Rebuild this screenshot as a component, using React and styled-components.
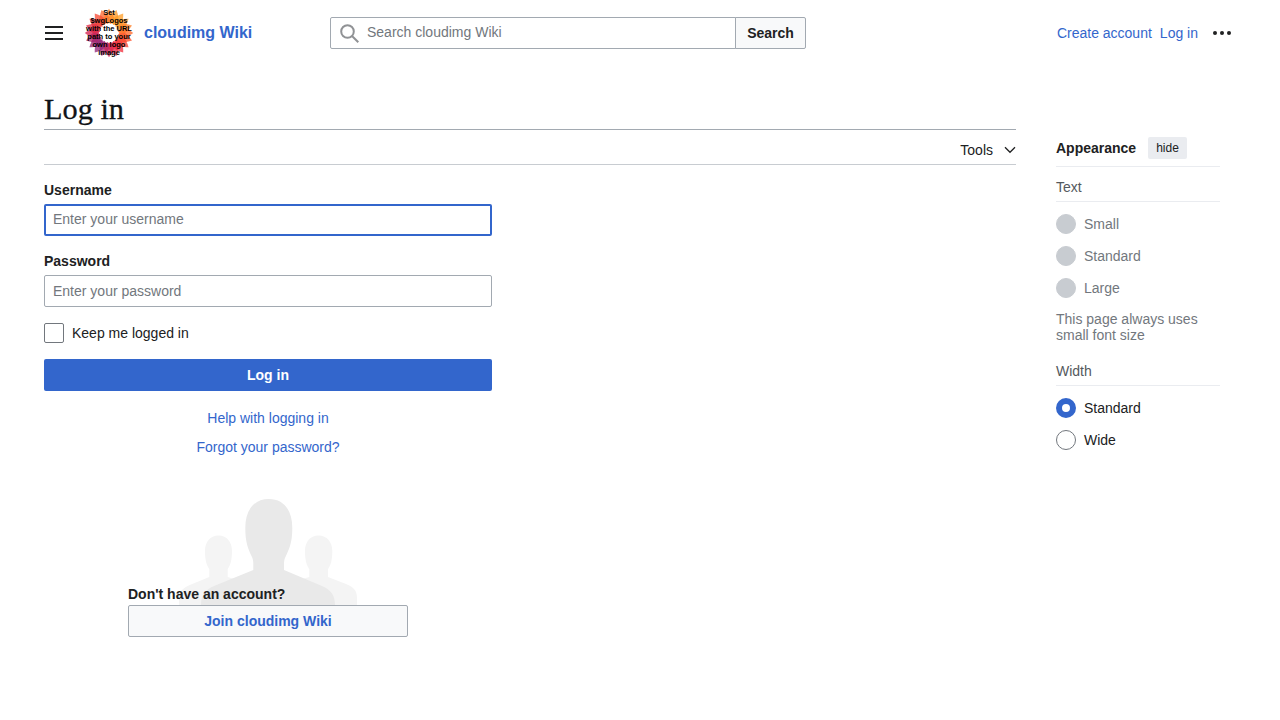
import React from 'react';
import styled, { createGlobalStyle, css } from 'styled-components';

const GlobalStyle = createGlobalStyle`
  *, *::before, *::after { box-sizing: border-box; }
  html, body { margin: 0; background: #fff; }
  body {
    font: 14px/22px "Liberation Sans", Helvetica, Arial, sans-serif;
    color: #202122;
  }
  a { color: #36c; text-decoration: none; }
  input, button { font: inherit; margin: 0; }
`;

const Page = styled.div`
  height: 720px;
  padding: 0 44px;
  overflow: hidden;
`;

const Header = styled.header`
  display: flex;
  align-items: center;
  height: 66px;
`;

const MenuButton = styled.button`
  display: flex;
  width: 20px;
  height: 20px;
  padding: 0;
  border: 0;
  background: none;
  color: #202122;
`;

const SiteLink = styled.a`
  display: flex;
  align-items: center;
  width: 246px;
  margin-left: 20px;
  font-size: 16px;
  font-weight: 700;
`;

const LogoImage = styled.svg`
  display: block;
  width: 50px;
  height: 50px;
  margin-right: 10px;
  overflow: visible;
`;

const LogoText = styled.text`
  font: 700 7.5px "Liberation Sans", Helvetica, sans-serif;
  fill: #000;
  text-anchor: middle;
`;

const SearchForm = styled.form`
  display: flex;
  width: 476px;
  height: 32px;
`;

const SearchField = styled.label`
  display: flex;
  align-items: center;
  gap: 7px;
  width: 406px;
  padding-left: 9px;
  border: 1px solid #a2a9b1;
  border-radius: 2px 0 0 2px;
  color: #909295;
  svg { margin-top: 2px; }
`;

const SearchInput = styled.input`
  flex: 1;
  min-width: 0;
  height: 30px;
  padding: 0 0 2px;
  border: 0;
  outline: 0;
  background: transparent;
  &::placeholder { color: #72777d; opacity: 1; }
`;

const SearchButton = styled.button`
  width: 71px;
  margin-left: -1px;
  padding: 0;
  border: 1px solid #a2a9b1;
  border-radius: 0 2px 2px 0;
  background: #f8f9fa;
  color: #202122;
  font-weight: 700;
`;

const UserLinks = styled.nav`
  display: flex;
  align-items: center;
  gap: 8px;
  margin-left: auto;
  margin-right: 4px;
  svg { margin-left: 6px; }
`;

const Columns = styled.div`
  display: flex;
  gap: 40px;
`;

const Content = styled.main`
  width: 972px;
  padding-top: 22px;
`;

const Title = styled.h1`
  height: 42px;
  margin: 0;
  border-bottom: 1px solid #a2a9b1;
  color: #101418;
  font: 400 30.3px/42px "Liberation Serif", Georgia, serif;
  -webkit-text-stroke: 0.3px #101418;
`;

const PageTools = styled.div`
  display: flex;
  justify-content: flex-end;
  align-items: center;
  gap: 11px;
  height: 35px;
  padding-top: 6px;
  border-bottom: 1px solid #c8ccd1;
`;

const LoginForm = styled.form`
  width: 448px;
  padding-top: 14px;
`;

const Field = styled.div`
  height: 71px;
`;

const FieldLabel = styled.label`
  display: block;
  height: 25px;
  font-weight: 700;
`;

const TextInput = styled.input`
  display: block;
  width: 100%;
  height: 32px;
  padding: 0 8px;
  border: 1px solid #a2a9b1;
  border-radius: 2px;
  outline: 0;
  background: #fff;
  &::placeholder { color: #72777d; opacity: 1; }
  ${(p) => p.$active && css`
    padding: 0 7px 2px;
    border: 2px solid #36c;
  `}
`;

const RememberRow = styled.label`
  display: flex;
  align-items: center;
  gap: 8px;
  height: 20px;
  margin: 2px 0 16px;
`;

const CheckBox = styled.input`
  appearance: none;
  width: 20px;
  height: 20px;
  border: 1px solid #72777d;
  border-radius: 2px;
  background: #fff;
`;

const SubmitButton = styled.button`
  display: block;
  width: 100%;
  height: 32px;
  border: 0;
  border-radius: 2px;
  background: #36c;
  color: #fff;
  font-weight: 700;
`;

const HelpLinks = styled.div`
  display: flex;
  flex-direction: column;
  align-items: center;
  gap: 7px;
  padding-top: 16px;
`;

const JoinSection = styled.section`
  display: grid;
  width: 280px;
  margin: 40px auto 0;
`;

const Crowd = styled.svg`
  grid-area: 1 / 1;
  justify-self: center;
  display: block;
`;

const JoinPrompt = styled.div`
  grid-area: 1 / 1;
  align-self: end;
  font-weight: 700;
`;

const JoinButton = styled.a`
  height: 32px;
  border: 1px solid #a2a9b1;
  border-radius: 2px;
  background: #f8f9fa;
  line-height: 30px;
  font-weight: 700;
  text-align: center;
`;

const Sidebar = styled.aside`
  width: 164px;
  padding-top: 71px;
`;

const SidebarHeading = styled.div`
  display: flex;
  align-items: flex-start;
  gap: 12px;
  height: 30px;
  border-bottom: 1px solid #eaecf0;
  font-weight: 700;
`;

const HideButton = styled.button`
  height: 22px;
  padding: 0 8px;
  border: 0;
  border-radius: 2px;
  background: #eaecf0;
  color: #202122;
  font-size: 12px;
  font-weight: 400;
`;

const GroupTitle = styled.div`
  height: 35px;
  padding-top: 9px;
  border-bottom: 1px solid #eaecf0;
  color: #54595d;
`;

const Options = styled.div`
  display: flex;
  flex-direction: column;
  gap: 12px;
  padding-top: 12px;
`;

const Option = styled.label`
  display: flex;
  align-items: center;
  gap: 8px;
  height: 20px;
  color: ${(p) => (p.$disabled ? '#72777d' : '#202122')};
`;

const Radio = styled.input`
  appearance: none;
  width: 20px;
  height: 20px;
  margin: 0;
  border: 1px solid #72777d;
  border-radius: 50%;
  background: #fff;
  &:checked { border: 6px solid #36c; }
  &:disabled { border-color: #c8ccd1; background: #c8ccd1; }
`;

const Note = styled.p`
  height: 40px;
  margin: 13px 0 0;
  color: #72777d;
  line-height: 16px;
`;

const petalStops = [
  [255, 140, 50], [255, 165, 50], [255, 150, 50], [255, 110, 50],
  [250, 75, 55], [240, 50, 70], [215, 45, 90], [150, 50, 130],
  [160, 45, 120], [215, 40, 85], [235, 60, 70], [250, 90, 60],
];

function petalColor(angle) {
  const t = (angle / 360) * petalStops.length;
  const i = Math.floor(t);
  const a = petalStops[i % petalStops.length];
  const b = petalStops[(i + 1) % petalStops.length];
  return `rgb(${a.map((v, k) => Math.round(v + (b[k] - v) * (t - i))).join(',')})`;
}

const petals = Array.from({ length: 20 }, (_, i) => i * 18);
const logoLines = ['Set', '$wgLogos', 'with the URL', 'path to your', 'own logo', 'image'];

function Logo() {
  return (
    <LogoImage viewBox="0 0 50 50">
      {petals.map((a) => (
        <path key={a} d="M25 15.500 L22.500 13 L21 7.500 Q22.700 3.500 25 .8 Q27.300 3.500 29 7.500 L27.500 13Z" fill={petalColor(a)} opacity=".8" transform={`rotate(${a} 25 25)`} />
      ))}
      {petals.map((a) => (
        <path key={a} d="M25 16 L23.400 14 L22.200 9.500 L25 5 L27.800 9.500 L26.600 14Z" fill={petalColor((a + 9) % 360)} transform={`rotate(${a + 9} 25 25)`} />
      ))}
      {logoLines.map((line, i) => (
        <LogoText key={line} x="25" y={7 + i * 8}>{line}</LogoText>
      ))}
    </LogoImage>
  );
}

const SizeOptions = ['Small', 'Standard', 'Large'];

export default function App() {
  return (
    <>
      <GlobalStyle />
      <Page>
        <Header>
          <MenuButton aria-label="Main menu">
            <svg width="20" height="20" viewBox="0 0 20 20" fill="currentColor">
              <path d="M1 3h18v2H1zm0 6h18v2H1zm0 6h18v2H1z" />
            </svg>
          </MenuButton>
          <SiteLink href="#"><Logo />cloudimg Wiki</SiteLink>
          <SearchForm>
            <SearchField>
              <svg width="20" height="20" viewBox="0 0 20 20" fill="none" stroke="currentColor" strokeWidth="2">
                <circle cx="7.5" cy="7.5" r="6.3" />
                <path d="M12 12l6.3 6.3" />
              </svg>
              <SearchInput placeholder="Search cloudimg Wiki" />
            </SearchField>
            <SearchButton type="button">Search</SearchButton>
          </SearchForm>
          <UserLinks>
            <a href="#">Create account</a>
            <a href="#">Log in</a>
            <svg width="20" height="20" viewBox="0 0 20 20" fill="#202122">
              <circle cx="3" cy="10" r="2" /><circle cx="10" cy="10" r="2" /><circle cx="17" cy="10" r="2" />
            </svg>
          </UserLinks>
        </Header>
        <Columns>
          <Content>
            <Title>Log in</Title>
            <PageTools>
              <span>Tools</span>
              <svg width="12" height="12" viewBox="0 0 12 12" fill="none" stroke="#202122" strokeWidth="1.3">
                <path d="M1 3.3l5 5 5-5" />
              </svg>
            </PageTools>
            <LoginForm>
              <Field>
                <FieldLabel>Username</FieldLabel>
                <TextInput $active placeholder="Enter your username" />
              </Field>
              <Field>
                <FieldLabel>Password</FieldLabel>
                <TextInput type="password" placeholder="Enter your password" />
              </Field>
              <RememberRow><CheckBox type="checkbox" />Keep me logged in</RememberRow>
              <SubmitButton type="button">Log in</SubmitButton>
              <HelpLinks>
                <a href="#">Help with logging in</a>
                <a href="#">Forgot your password?</a>
              </HelpLinks>
              <JoinSection>
                <Crowd width="178" height="107" viewBox="0 0 178 107">
                  <g fill="#f4f4f4" transform="translate(0 1)">
                    <path d="M39.5 36.5C31 36.5 26 43 26 52c0 9 1.500 14 4.300 18v8L12 85.500C4 89 0 92 0 99v8h89V90L48.700 78v-8C51.500 66 53 61 53 52c0-9-5-15.500-13.500-15.500Z" />
                    <path d="M139.500 36.500c-8.500 0-13.500 6.500-13.500 15.500 0 9 1.500 14 4.300 18v8L89 90v17h89v-8c0-7-3-11-11-14l-18-7v-8c2.800-4 4.300-9 4.300-18 0-9-5.300-15.500-13.800-15.500Z" />
                  </g>
                  <path fill="#e9e9e9" d="M89.800 1C75 1 66.300 12 66.300 30c0 15 3 21 6.200 28 1.500 3 1.800 5 1.800 8v6L35 88c-9 4-13 9-13 19h134c0-10-4-15-13-19l-38-16v-6c0-3 .4-5 1.900-8 3.200-7 6.400-13 6.400-28 0-18-8.700-29-23.500-29Z" />
                </Crowd>
                <JoinPrompt>Don't have an account?</JoinPrompt>
                <JoinButton href="#">Join cloudimg Wiki</JoinButton>
              </JoinSection>
            </LoginForm>
          </Content>
          <Sidebar>
            <SidebarHeading>Appearance<HideButton>hide</HideButton></SidebarHeading>
            <GroupTitle>Text</GroupTitle>
            <Options>
              {SizeOptions.map((name) => (
                <Option key={name} $disabled><Radio type="radio" name="size" disabled />{name}</Option>
              ))}
            </Options>
            <Note>This page always uses small font size</Note>
            <GroupTitle>Width</GroupTitle>
            <Options>
              <Option><Radio type="radio" name="width" defaultChecked />Standard</Option>
              <Option><Radio type="radio" name="width" />Wide</Option>
            </Options>
          </Sidebar>
        </Columns>
      </Page>
    </>
  );
}
